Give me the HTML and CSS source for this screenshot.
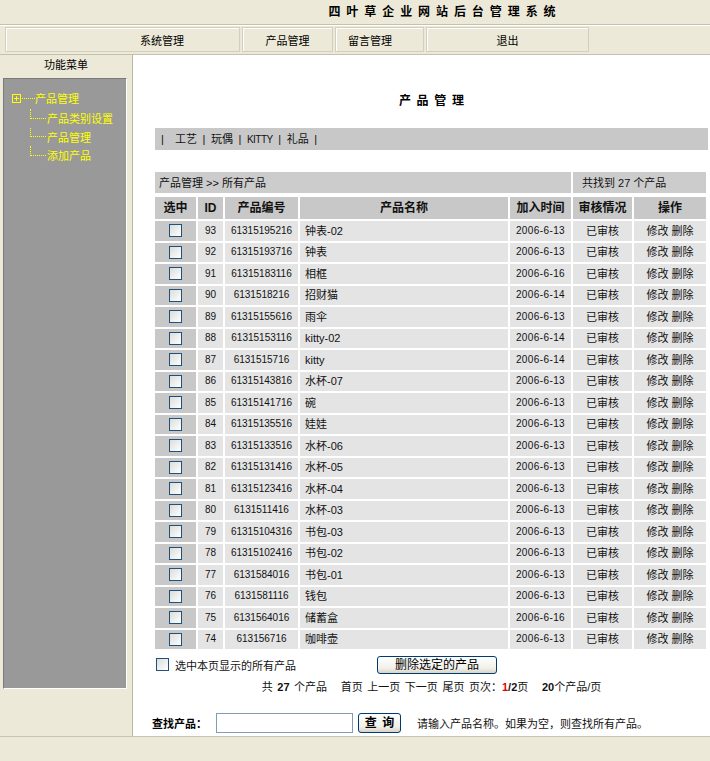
FILE: index.html
```html
<!DOCTYPE html>
<html lang="zh-CN">
<head>
<meta charset="utf-8">
<title>四叶草企业网站后台管理系统</title>
<link rel="stylesheet" href="styles.css">
</head>
<body>
<div class="top">
  <div class="sitetitle">四 叶 草 企 业 网 站 后 台 管 理 系 统</div>
</div>
<div class="nav">
  <div class="navcell n1">系统管理</div>
  <div class="navcell n2">产品管理</div>
  <div class="navcell n3">留言管理</div>
  <div class="navcell n4">退出</div>
</div>
<div class="main">
  <div class="side">
    <div class="sidehead">功能菜单</div>
    <div class="panel">
      <div class="root">
        <svg class="rooticon" width="23" height="9" viewBox="0 0 23 9"><rect x="0.5" y="0.5" width="8" height="8" fill="none" stroke="#ffff00"/><path d="M2 4.5H7M4.5 2V7" stroke="#ffff00"/><path d="M10 4.5H23" stroke="#ffff00" stroke-dasharray="1 1"/></svg>
        <span>产品管理</span>
      </div>
      <div class="subs">
        <div class="sub"><span class="conn"></span><span>产品类别设置</span></div>
        <div class="sub"><span class="conn"></span><span>产品管理</span></div>
        <div class="sub"><span class="conn"></span><span>添加产品</span></div>
      </div>
    </div>
  </div>
  <div class="content">
    <div class="pagetitle">产 品 管 理</div>
    <div class="catbar">|&nbsp; 工艺 | 玩偶 | <span class="kitty">KITTY</span> | 礼品 |</div>
    <table class="crumb">
      <colgroup><col class="c-left"><col class="c-right"></colgroup>
      <tr><td class="crumb-l">产品管理 &gt;&gt; 所有产品</td><td class="crumb-r">共找到 27 个产品</td></tr>
    </table>
    <table class="grid">
      <colgroup>
        <col class="w-sel"><col class="w-id"><col class="w-code"><col class="w-name"><col class="w-date"><col class="w-state"><col class="w-op">
      </colgroup>
      <thead>
        <tr><th>选中</th><th>ID</th><th>产品编号</th><th>产品名称</th><th>加入时间</th><th>审核情况</th><th>操作</th></tr>
      </thead>
      <tbody>
        <tr><td class="sel"><span class="cb"></span></td><td class="num">93</td><td class="num">61315195216</td><td class="name">钟表-02</td><td class="date">2006-6-13</td><td>已审核</td><td>修改 删除</td></tr>
        <tr><td class="sel"><span class="cb"></span></td><td class="num">92</td><td class="num">61315193716</td><td class="name">钟表</td><td class="date">2006-6-13</td><td>已审核</td><td>修改 删除</td></tr>
        <tr><td class="sel"><span class="cb"></span></td><td class="num">91</td><td class="num">61315183116</td><td class="name">相框</td><td class="date">2006-6-16</td><td>已审核</td><td>修改 删除</td></tr>
        <tr><td class="sel"><span class="cb"></span></td><td class="num">90</td><td class="num">6131518216</td><td class="name">招财猫</td><td class="date">2006-6-14</td><td>已审核</td><td>修改 删除</td></tr>
        <tr><td class="sel"><span class="cb"></span></td><td class="num">89</td><td class="num">61315155616</td><td class="name">雨伞</td><td class="date">2006-6-13</td><td>已审核</td><td>修改 删除</td></tr>
        <tr><td class="sel"><span class="cb"></span></td><td class="num">88</td><td class="num">61315153116</td><td class="name">kitty-02</td><td class="date">2006-6-14</td><td>已审核</td><td>修改 删除</td></tr>
        <tr><td class="sel"><span class="cb"></span></td><td class="num">87</td><td class="num">6131515716</td><td class="name">kitty</td><td class="date">2006-6-14</td><td>已审核</td><td>修改 删除</td></tr>
        <tr><td class="sel"><span class="cb"></span></td><td class="num">86</td><td class="num">61315143816</td><td class="name">水杯-07</td><td class="date">2006-6-13</td><td>已审核</td><td>修改 删除</td></tr>
        <tr><td class="sel"><span class="cb"></span></td><td class="num">85</td><td class="num">61315141716</td><td class="name">碗</td><td class="date">2006-6-13</td><td>已审核</td><td>修改 删除</td></tr>
        <tr><td class="sel"><span class="cb"></span></td><td class="num">84</td><td class="num">61315135516</td><td class="name">娃娃</td><td class="date">2006-6-13</td><td>已审核</td><td>修改 删除</td></tr>
        <tr><td class="sel"><span class="cb"></span></td><td class="num">83</td><td class="num">61315133516</td><td class="name">水杯-06</td><td class="date">2006-6-13</td><td>已审核</td><td>修改 删除</td></tr>
        <tr><td class="sel"><span class="cb"></span></td><td class="num">82</td><td class="num">61315131416</td><td class="name">水杯-05</td><td class="date">2006-6-13</td><td>已审核</td><td>修改 删除</td></tr>
        <tr><td class="sel"><span class="cb"></span></td><td class="num">81</td><td class="num">61315123416</td><td class="name">水杯-04</td><td class="date">2006-6-13</td><td>已审核</td><td>修改 删除</td></tr>
        <tr><td class="sel"><span class="cb"></span></td><td class="num">80</td><td class="num">6131511416</td><td class="name">水杯-03</td><td class="date">2006-6-13</td><td>已审核</td><td>修改 删除</td></tr>
        <tr><td class="sel"><span class="cb"></span></td><td class="num">79</td><td class="num">61315104316</td><td class="name">书包-03</td><td class="date">2006-6-13</td><td>已审核</td><td>修改 删除</td></tr>
        <tr><td class="sel"><span class="cb"></span></td><td class="num">78</td><td class="num">61315102416</td><td class="name">书包-02</td><td class="date">2006-6-13</td><td>已审核</td><td>修改 删除</td></tr>
        <tr><td class="sel"><span class="cb"></span></td><td class="num">77</td><td class="num">6131584016</td><td class="name">书包-01</td><td class="date">2006-6-13</td><td>已审核</td><td>修改 删除</td></tr>
        <tr><td class="sel"><span class="cb"></span></td><td class="num">76</td><td class="num">6131581116</td><td class="name">钱包</td><td class="date">2006-6-13</td><td>已审核</td><td>修改 删除</td></tr>
        <tr><td class="sel"><span class="cb"></span></td><td class="num">75</td><td class="num">6131564016</td><td class="name">储蓄盒</td><td class="date">2006-6-16</td><td>已审核</td><td>修改 删除</td></tr>
        <tr><td class="sel"><span class="cb"></span></td><td class="num">74</td><td class="num">613156716</td><td class="name">咖啡壶</td><td class="date">2006-6-13</td><td>已审核</td><td>修改 删除</td></tr>
      </tbody>
    </table>
    <div class="actions">
      <div class="selall"><span class="cb"></span><span class="selall-text">选中本页显示的所有产品</span></div>
      <button class="xpbtn delbtn" type="button">删除选定的产品</button>
    </div>
    <div class="pager">共 <b>27</b> 个产品&nbsp;&nbsp; 首页 上一页 下一页 尾页 页次：<b class="red">1</b><b>/2</b>页&nbsp;&nbsp; <b>20</b>个产品/页</div>
    <div class="search">
      <span class="search-label">查找产品：</span>
      <span class="search-input"></span>
      <button class="xpbtn findbtn" type="button">查 询</button>
      <span class="hint">请输入产品名称。如果为空，则查找所有产品。</span>
    </div>
  </div>
</div>
</body>
</html>
```

FILE: styles.css
```css
* { box-sizing: border-box; }
html, body { margin: 0; padding: 0; }
body {
  width: 710px;
  height: 761px;
  overflow: hidden;
  background: #ECE9D8;
  font-family: "Liberation Sans", "Noto Sans CJK SC", sans-serif;
  font-size: 11px;
  color: #111;
}

/* header */
.top {
  height: 25px;
  border-bottom: 1px solid #C5C1AE;
  display: flex;
  align-items: center;
  justify-content: center;
  padding-left: 174px;
}
.sitetitle {
  font-size: 12px;
  font-weight: bold;
  word-spacing: 2.6px;
  line-height: 14px;
  color: #000;
}

.nav {
  height: 30px;
  border-top: 1px solid #fff;
  border-bottom: 1px solid #C5C1AE;
  padding: 1px 0 2px 5px;
  display: flex;
  gap: 2px;
}
.navcell {
  height: 25px;
  border: 1px solid #D3CFBD;
  box-shadow: inset 1px 1px 0 #fff;
  display: flex;
  align-items: center;
  justify-content: center;
  font-size: 11px;
  color: #000;
}
.n1 { width: 235px; padding-left: 79px; }
.n2 { width: 91px; }
.n3 { width: 89px; padding-right: 19px; }
.n4 { width: 163px; }

/* main area */
.main {
  display: flex;
  height: 682px;
  border-bottom: 1px solid #C8C4B2;
}
.side {
  width: 133px;
  flex: none;
  border-right: 1px solid #BCB8A6;
}
.sidehead {
  height: 23px;
  line-height: 21px;
  text-align: center;
  font-size: 11px;
  color: #000;
}
.panel {
  margin-left: 3px;
  width: 124px;
  height: 611px;
  background: #999999;
  border: 1px solid;
  border-color: #7A7A7A #fff #fff #7A7A7A;
  color: #FFFF00;
  font-size: 11px;
}
.root {
  display: flex;
  align-items: center;
  height: 16px;
  margin: 11px 0 0 8px;
}
.rooticon { display: block; flex: none; }
.subs { margin: 3px 0 0 26px; }
.sub {
  display: flex;
  align-items: center;
  height: 18.5px;
}
.conn {
  align-self: flex-start;
  flex: none;
  width: 16px;
  height: 9.5px;
  margin-right: 1px;
  border-left: 1px dotted #FFFF00;
  border-bottom: 1px dotted #FFFF00;
}

.content {
  flex: 1;
  background: #fff;
  padding: 0 4px 0 22px;
}
.pagetitle {
  margin-top: 36px;
  height: 20px;
  line-height: 20px;
  text-align: center;
  font-size: 12px;
  font-weight: bold;
  word-spacing: 2.4px;
  color: #000;
}
.catbar {
  margin-top: 17px;
  height: 22px;
  line-height: 22px;
  background: #C8C8C8;
  padding-left: 6px;
  white-space: pre;
  word-spacing: 2.5px;
  color: #111;
}
.kitty { font-size: 10px; letter-spacing: -0.5px; }

table {
  border-collapse: separate;
  border-spacing: 2px;
  table-layout: fixed;
  width: 555px;
  margin-left: -2px;
}
.crumb { margin-top: 20px; }
.c-left { width: 416px; }
.c-right { width: 133px; }
.crumb td {
  height: 21px;
  padding: 0;
  background: #CCCCCC;
  line-height: 14px;
}
.crumb-l { padding-left: 4px !important; }
.crumb-r { padding-left: 9px !important; }

.w-sel { width: 41px; }
.w-id { width: 25px; }
.w-code { width: 73px; }
.w-name { width: 208px; }
.w-date { width: 61px; }
.w-state { width: 59px; }
.w-op { width: 72px; }

.grid th {
  height: 22px;
  padding: 0;
  background: #C8C8C8;
  font-size: 12px;
  font-weight: bold;
  line-height: 14px;
  color: #111;
}
.grid td {
  height: 19.5px;
  padding: 0;
  background: #E4E4E4;
  text-align: center;
  line-height: 14px;
  font-size: 11px;
  white-space: nowrap;
  overflow: hidden;
}
.grid td.sel { background: #C8C8C8; }
.grid td.num { font-size: 10px; }
.grid td.date { font-size: 10px; letter-spacing: 0.4px; }
.grid td.name { text-align: left; padding-left: 5px; }

.cb {
  display: inline-block;
  width: 13px;
  height: 13px;
  border: 1px solid #1C5180;
  background: linear-gradient(135deg, #DCDCD7, #FFFFFF);
  vertical-align: middle;
}
.grid td.sel .cb { display: block; margin: 0 auto; }

.actions {
  display: flex;
  align-items: center;
  height: 19px;
  margin-top: 4px;
}
.selall {
  width: 222px;
  display: flex;
  align-items: center;
  padding-left: 1px;
}
.selall-text { margin-left: 6px; color: #111; }

.xpbtn {
  font-family: "Liberation Sans", "Noto Sans CJK SC", sans-serif;
  border: 1px solid #003C74;
  border-radius: 3px;
  background: linear-gradient(#FFFFFF, #F1F0EA 70%, #D8D3C6);
  padding: 0;
  color: #000;
}
.delbtn {
  width: 120px;
  height: 18px;
  font-size: 12px;
  line-height: 16px;
}

.pager {
  margin-top: 5px;
  height: 16px;
  line-height: 16px;
  text-align: center;
  color: #111;
  white-space: pre;
  word-spacing: 1.5px;
}
.pager b { color: #111; }
.pager b.red { color: #E00000; }

.search {
  display: flex;
  align-items: center;
  height: 20px;
  margin-top: 18px;
  margin-left: -3px;
}
.search-label {
  width: 64px;
  font-weight: bold;
  font-size: 11px;
  color: #000;
}
.search-input {
  width: 137px;
  height: 20px;
  border: 1px solid #7F9DB9;
  background: #fff;
}
.findbtn {
  margin-left: 5px;
  width: 43px;
  height: 20px;
  font-size: 12px;
  font-weight: bold;
  line-height: 18px;
  word-spacing: 2px;
}
.hint {
  margin-left: 16px;
  color: #111;
}
```
